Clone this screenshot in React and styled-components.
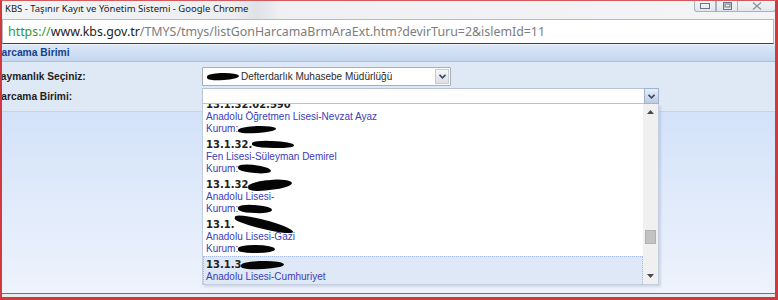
import styled, { createGlobalStyle } from "styled-components";

const GlobalStyle = createGlobalStyle`
  html, body {
    margin: 0;
    padding: 0;
    background: #ffffff;
  }
  #root {
    width: 778px;
    height: 300px;
  }
`;

const items = [
  { code: "13.1.32.02.590", name: "Anadolu Öğretmen Lisesi-Nevzat Ayaz", kurumBlot: { w: 38, h: 7, r: -3 } },
  { code: "13.1.32.", codeBlot: { w: 42, h: 7, r: 2 }, name: "Fen Lisesi-Süleyman Demirel", kurumBlot: { w: 33, h: 8, r: 6 } },
  { code: "13.1.32", codeBlot: { w: 44, h: 10, r: -6 }, name: "Anadolu Lisesi-", kurumBlot: { w: 34, h: 8, r: 3 } },
  { code: "13.1.", codeBlot: { w: 60, h: 9, r: 14 }, name: "Anadolu Lisesi-Gazi", kurumBlot: { w: 37, h: 8, r: 0 } },
  { code: "13.1.3", codeBlot: { w: 43, h: 8, r: -2 }, name: "Anadolu Lisesi-Cumhuriyet", kurum: "131", kurumBlot: { w: 30, h: 7, r: 0 }, selected: true },
];

export default function App() {
  return (
    <>
      <GlobalStyle />
      <Window>
        <TitleBar>
          <Title>KBS - Taşınır Kayıt ve Yönetim Sistemi - Google Chrome</Title>
          <Controls>
            <CtrlButton>
              <svg width="10" height="6" viewBox="0 0 10 6">
                <rect x="0.5" y="0.5" width="9" height="5" fill="none" stroke="#6b7480" />
              </svg>
            </CtrlButton>
            <CtrlButton>
              <svg width="9" height="8" viewBox="0 0 9 8">
                <rect x="0.5" y="0.5" width="8" height="7" fill="none" stroke="#6b7480" />
                <rect x="2" y="2" width="5" height="3" fill="none" stroke="#6b7480" />
              </svg>
            </CtrlButton>
            <CtrlButton $wide>
              <svg width="10" height="8" viewBox="0 0 10 8">
                <path d="M1 0.5 L9 7.5 M9 0.5 L1 7.5" stroke="#8a929c" strokeWidth="1.3" fill="none" />
              </svg>
            </CtrlButton>
          </Controls>
        </TitleBar>

        <UrlBar>
          <Url>
            <Scheme>https://</Scheme>
            <Host>www.kbs.gov.tr</Host>
            <Path>/TMYS/tmys/listGonHarcamaBrmAraExt.htm?devirTuru=2&amp;islemId=11</Path>
          </Url>
        </UrlBar>

        <Page>
          <PanelHeader>Harcama Birimi</PanelHeader>
          <Form>
            <Row>
              <Label>Saymanlık Seçiniz:</Label>
              <Select>
                <SelectText>
                  <Blot $w={32} $h={7} $r={-2} />
                  Defterdarlık Muhasebe Müdürlüğü
                </SelectText>
                <SelectTrigger>
                  <Chevron />
                </SelectTrigger>
              </Select>
            </Row>
            <Row>
              <Label>Harcama Birimi:</Label>
              <Combo>
                <ComboInput />
                <ComboTrigger>
                  <Chevron />
                </ComboTrigger>
                <DropList>
                  <ListBody>
                    <ListScroll>
                      {items.map((it, i) => (
                        <Item key={i} $selected={it.selected}>
                          <Code>
                            {it.code}
                            {it.codeBlot && <Blot $w={it.codeBlot.w} $h={it.codeBlot.h} $r={it.codeBlot.r} />}
                          </Code>
                          <Name>{it.name}</Name>
                          <Name>
                            Kurum:{it.kurum}
                            <Blot $w={it.kurumBlot.w} $h={it.kurumBlot.h} $r={it.kurumBlot.r} />
                          </Name>
                        </Item>
                      ))}
                    </ListScroll>
                  </ListBody>
                  <ScrollBar>
                    <ScrollArrow>
                      <svg width="7" height="4" viewBox="0 0 7 4">
                        <path d="M0 4 L3.5 0 L7 4 Z" fill="#4a4a4a" />
                      </svg>
                    </ScrollArrow>
                    <Track>
                      <Thumb />
                    </Track>
                    <ScrollArrow>
                      <svg width="7" height="4" viewBox="0 0 7 4">
                        <path d="M0 0 L3.5 4 L7 0 Z" fill="#4a4a4a" />
                      </svg>
                    </ScrollArrow>
                  </ScrollBar>
                </DropList>
              </Combo>
            </Row>
          </Form>
          <Backdrop />
        </Page>
        <StatusStrip />
      </Window>
    </>
  );
}

function Chevron() {
  return (
    <svg width="7" height="5" viewBox="0 0 7 5">
      <path d="M0.5 0.8 L3.5 3.8 L6.5 0.8" stroke="#3b4a63" strokeWidth="1.6" fill="none" />
    </svg>
  );
}

const Window = styled.div`
  width: 778px;
  height: 300px;
  box-sizing: border-box;
  border-left: 2px solid #d0393d;
  border-right: 3px solid #d0393d;
  border-top: 1px solid #d45a5d;
  border-bottom: 3px solid #d0393d;
  display: flex;
  flex-direction: column;
  overflow: hidden;
  background: #eef2f7;
`;

const TitleBar = styled.div`
  height: 18px;
  flex: none;
  display: flex;
  align-items: flex-start;
  justify-content: space-between;
  background: linear-gradient(90deg, #f2f3f5 0%, #eceef1 30%, #dfe2e6 33%, #eef0f3 36%, #f3f4f6 100%);
`;

const Title = styled.div`
  font-family: "Noto Sans", "Liberation Sans", sans-serif;
  font-size: 9.5px;
  color: #1b1b1b;
  padding: 1px 0 0 3px;
  line-height: 14px;
`;

const Controls = styled.div`
  display: flex;
  margin-right: -1px;
  margin-top: -1px;
`;

const CtrlButton = styled.div`
  width: ${(p) => (p.$wide ? "38px" : "22px")};
  height: 12px;
  box-sizing: border-box;
  border: 1px solid #a9b1bb;
  border-top: none;
  border-left: ${(p) => (p.$wide ? "none" : "1px solid #a9b1bb")};
  border-radius: ${(p) => (p.$wide ? "0 0 3px 0" : "0")};
  background: linear-gradient(#f4f6f8, #e3e7ec);
  display: flex;
  align-items: center;
  justify-content: center;
  &:first-child {
    border-radius: 0 0 0 3px;
  }
`;

const UrlBar = styled.div`
  height: 25px;
  flex: none;
  box-sizing: border-box;
  background: #ffffff;
  border: 1px solid #b4bac2;
  border-bottom: 1px solid #3e4148;
  margin-right: 1px;
  display: flex;
  align-items: center;
`;

const Url = styled.div`
  font-family: "Noto Sans", "Liberation Sans", sans-serif;
  font-size: 12.4px;
  padding-left: 5px;
  white-space: nowrap;
`;

const Scheme = styled.span`
  color: #2f9a33;
`;

const Host = styled.span`
  color: #222222;
`;

const Path = styled.span`
  color: #7d7d7d;
`;

const Page = styled.div`
  flex: 1;
  display: flex;
  flex-direction: column;
  overflow: hidden;
  margin-left: -8px;
  padding-top: 1px;
  font-family: "Liberation Sans", Arial, sans-serif;
`;

const PanelHeader = styled.div`
  height: 16px;
  flex: none;
  box-sizing: content-box;
  border-bottom: 1px solid #a9c3e6;
  background: linear-gradient(#dae7f8, #c4d7f0);
  color: #15428b;
  font-weight: bold;
  font-size: 10.3px;
  line-height: 16px;
`;

const Form = styled.div`
  flex: none;
  height: 50px;
  box-sizing: border-box;
  padding-top: 5px;
  background: #dfe8f5;
  border-bottom: 1px solid #c4d3ea;
  display: flex;
  flex-direction: column;
  gap: 2px;
  position: relative;
  z-index: 1;
`;

const Row = styled.div`
  display: grid;
  grid-template-columns: 208px auto;
  align-items: center;
`;

const Label = styled.div`
  font-weight: bold;
  font-size: 10.2px;
  color: #1e1e1e;
  white-space: nowrap;
`;

const Select = styled.div`
  width: 249px;
  height: 19px;
  box-sizing: border-box;
  border: 1px solid #a6afbb;
  background: #ffffff;
  display: flex;
  align-items: center;
  justify-content: space-between;
  border-radius: 1px;
`;

const SelectText = styled.div`
  font-size: 10px;
  color: #2b2b2b;
  padding-left: 4px;
  display: flex;
  align-items: center;
  gap: 2px;
  white-space: nowrap;
`;

const SelectTrigger = styled.div`
  width: 14px;
  height: 15px;
  margin-right: 1px;
  background: linear-gradient(#f5f6f8, #dcdfe4);
  border: 1px solid #c6ccd4;
  box-sizing: border-box;
  display: flex;
  align-items: center;
  justify-content: center;
`;

const Combo = styled.div`
  width: 457px;
  height: 16px;
  position: relative;
  display: flex;
`;

const ComboInput = styled.div`
  flex: 1;
  box-sizing: border-box;
  border: 1px solid #b5c3d6;
  border-right: none;
  background: #ffffff;
`;

const ComboTrigger = styled.div`
  width: 15px;
  box-sizing: border-box;
  border: 1px solid #9fb3cf;
  background: linear-gradient(#e6edf7, #bccbe0);
  display: flex;
  align-items: center;
  justify-content: center;
`;

const DropList = styled.div`
  position: absolute;
  top: 16px;
  left: 0;
  width: 457px;
  height: 181px;
  box-sizing: border-box;
  border: 1px solid #c3cfdf;
  border-top: none;
  background: #ffffff;
  display: flex;
  box-shadow: 2px 2px 2px rgba(120, 140, 170, 0.25);
`;

const ListBody = styled.div`
  flex: 1;
  overflow: hidden;
`;

const ListScroll = styled.div`
  margin-top: -8px;
`;

const Item = styled.div`
  height: 40px;
  box-sizing: border-box;
  padding: 1px 2px;
  border: 1px ${(p) => (p.$selected ? "dotted #a3bae9" : "solid transparent")};
  background: ${(p) => (p.$selected ? "#dfe8f6" : "transparent")};
`;

const Code = styled.div`
  font-family: "DejaVu Sans", Verdana, sans-serif;
  font-weight: bold;
  font-size: 10px;
  line-height: 13px;
  color: #222222;
  display: flex;
  align-items: center;
  white-space: nowrap;
`;

const Name = styled.div`
  font-size: 10px;
  line-height: 12px;
  color: #3b3db8;
  display: flex;
  align-items: center;
  white-space: nowrap;
`;

const Blot = styled.span`
  display: inline-block;
  width: ${(p) => p.$w}px;
  height: ${(p) => p.$h}px;
  background: #050505;
  border-radius: 45% 55% 50% 40%;
  transform: rotate(${(p) => p.$r}deg);
`;

const ScrollBar = styled.div`
  width: 15px;
  flex: none;
  background: #f0f0f0;
  display: flex;
  flex-direction: column;
`;

const ScrollArrow = styled.div`
  height: 16px;
  flex: none;
  display: flex;
  align-items: center;
  justify-content: center;
`;

const Track = styled.div`
  flex: 1;
  padding-top: 110px;
`;

const Thumb = styled.div`
  width: 11px;
  height: 14px;
  margin-left: 2px;
  background: #c2c2c2;
  border: 1px solid #b0b0b0;
  box-sizing: border-box;
`;

const Backdrop = styled.div`
  flex: 1;
  background: linear-gradient(#d3e2f9, #eef3fc);
`;

const StatusStrip = styled.div`
  height: 3px;
  flex: none;
  border-top: 1px solid #6e7379;
  background: #e9ebee;
`;
